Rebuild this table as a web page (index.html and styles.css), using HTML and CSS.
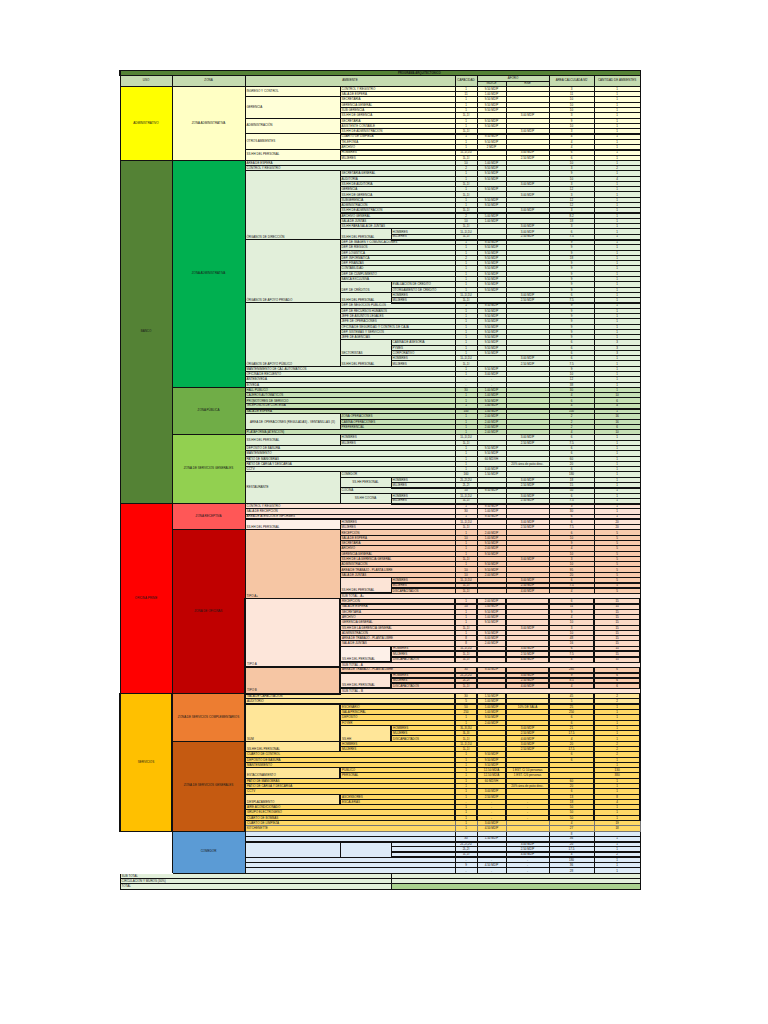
FILE: index.html
```html
<!DOCTYPE html>
<html lang="es">
<head>
<meta charset="utf-8">
<title>Programa Arquitectónico</title>
<link rel="stylesheet" href="styles.css">
</head>
<body>
<div class="page">
<table class="sheet">
<colgroup>
<col class="c-uso"><col class="c-zona"><col class="c-a1"><col class="c-a2"><col class="c-a3"><col class="c-cap"><col class="c-afo"><col class="c-rne"><col class="c-area"><col class="c-cant">
</colgroup>
<tbody class="s-head">
<tr class="title"><td colspan="10">PROGRAMA ARQUITECTONICO</td></tr>
<tr class="head"><td rowspan="2">USO</td><td rowspan="2">ZONA</td><td rowspan="2" colspan="3">AMBIENTE</td><td rowspan="2">CAPACIDAD</td><td colspan="2">AFORO</td><td rowspan="2">AREA CALCULADA M2</td><td rowspan="2">CANTIDAD DE AMBIENTES</td></tr>
<tr class="head"><td>INDICE</td><td>RNE</td></tr>
</tbody>
<tbody class="s-adm">
<tr><td rowspan="14" class="uso u-adm">ADMINISTRATIVO</td><td rowspan="14" class="zona z-adm">ZONA ADMINISTRATIVA</td><td rowspan="2" class="t m">INGRESO Y CONTROL</td><td colspan="2" class="t">CONTROL Y REGISTRO</td><td>1</td><td>9.50 M2/P</td><td></td><td>3</td><td>1</td></tr>
<tr><td colspan="2" class="t">SALA DE ESPERA</td><td>11</td><td>1.00 M2/P</td><td></td><td>11</td><td>1</td></tr>
<tr><td rowspan="4" class="t m">GERENCIA</td><td colspan="2" class="t">SECRETARIA</td><td>1</td><td>9.50 M2/P</td><td></td><td>10</td><td>1</td></tr>
<tr><td colspan="2" class="t">GERENCIA GENERAL</td><td>1</td><td>9.50 M2/P</td><td></td><td>10</td><td>1</td></tr>
<tr><td colspan="2" class="t">SUB GERENCIA</td><td>1</td><td>9.50 M2/P</td><td></td><td>10</td><td>1</td></tr>
<tr><td colspan="2" class="t">SS.HH DE GERENCIA</td><td>1L,1I</td><td></td><td>3.00 M2/P</td><td>3</td><td>1</td></tr>
<tr><td rowspan="3" class="t m">ADMINISTRACIÓN</td><td colspan="2" class="t">SECRETARIA</td><td>1</td><td>9.50 M2/P</td><td></td><td>9</td><td>1</td></tr>
<tr><td colspan="2" class="t">ASISTENTE CONTABLE</td><td>1</td><td>9.50 M2/P</td><td></td><td>10</td><td>1</td></tr>
<tr class="thick"><td colspan="2" class="t">SS.HH DE ADMINISTRACIÓN</td><td>1L,1I</td><td></td><td>3.00 M2/P</td><td>3</td><td>1</td></tr>
<tr><td rowspan="3" class="t m">OTROS AMBIENTES</td><td colspan="2" class="t">CUARTO DE LIMPIEZA</td><td>1</td><td>9.50 M2/P</td><td></td><td>4</td><td>1</td></tr>
<tr><td colspan="2" class="t">TELEFONÍA</td><td>1</td><td>9.50 M2/P</td><td></td><td>4</td><td>1</td></tr>
<tr class="thick"><td colspan="2" class="t">ARCHIVO</td><td>1</td><td>2 M2/P</td><td></td><td>4</td><td>1</td></tr>
<tr><td rowspan="2" class="t m">SS.HH DEL PERSONAL</td><td colspan="2" class="t">HOMBRES</td><td>1L,1I,1U</td><td></td><td>3.00 M2/P</td><td>6</td><td>1</td></tr>
<tr><td colspan="2" class="t">MUJERES</td><td>1L,1I</td><td></td><td>2.50 M2/P</td><td>6</td><td>1</td></tr>
</tbody>
<tbody class="s-banco">
<tr><td rowspan="65" class="uso u-banco">BANCO</td><td rowspan="43" class="zona z-badm">ZONA ADMINISTRATIVA</td><td colspan="3" class="t">ÁREA DE ESPERA</td><td>10</td><td>1.00 M2/P</td><td></td><td>10</td><td>1</td></tr>
<tr><td colspan="3" class="t">CONTROL Y REGISTRO</td><td>2</td><td>9.50 M2/P</td><td></td><td>3</td><td>2</td></tr>
<tr><td rowspan="13" class="t">ÓRGANOS DE DIRECCIÓN</td><td colspan="2" class="t">SECRETARIA GENERAL</td><td>1</td><td>9.50 M2/P</td><td></td><td>9</td><td>1</td></tr>
<tr><td colspan="2" class="t">AUDITORIA</td><td>1</td><td>9.50 M2/P</td><td></td><td>10</td><td>4</td></tr>
<tr><td colspan="2" class="t">SS.HH DE AUDITORIA</td><td>1L,1I</td><td></td><td>3.00 M2/P</td><td>3</td><td>1</td></tr>
<tr><td colspan="2" class="t">GERENCIA</td><td>1</td><td>9.50 M2/P</td><td></td><td>12</td><td>1</td></tr>
<tr><td colspan="2" class="t">SS.HH DE GERENCIA</td><td>1L,1I</td><td></td><td>3.00 M2/P</td><td>3</td><td>1</td></tr>
<tr><td colspan="2" class="t">SUBGERENCIA</td><td>1</td><td>9.50 M2/P</td><td></td><td>12</td><td>1</td></tr>
<tr><td colspan="2" class="t">ADMINISTRACIÓN</td><td>1</td><td>9.50 M2/P</td><td></td><td>12</td><td>1</td></tr>
<tr class="thick"><td colspan="2" class="t">SS.HH DE ADMINISTRACIÓN</td><td>1L,1I</td><td></td><td>3.00 M2/P</td><td>3</td><td>1</td></tr>
<tr><td colspan="2" class="t">ARCHIVO GENERAL</td><td>2</td><td>5.00 M2/P</td><td></td><td>8.2</td><td>1</td></tr>
<tr><td colspan="2" class="t">SALA DE JUNTAS</td><td>10</td><td>1.00 M2/P</td><td></td><td>18</td><td>1</td></tr>
<tr><td colspan="2" class="t">SS.HH PARA SALA DE JUNTAS</td><td>1L,1I</td><td></td><td>3.00 M2/P</td><td>3</td><td>1</td></tr>
<tr><td rowspan="2" class="t">SS.HH DEL PERSONAL</td><td class="t">HOMBRES</td><td>1L,1I,1U</td><td></td><td>3.00 M2/P</td><td>6</td><td>1</td></tr>
<tr class="thick"><td class="t">MUJERES</td><td>1L,1I</td><td></td><td>2.50 M2/P</td><td>7.5</td><td>1</td></tr>
<tr><td rowspan="12" class="t">ÓRGANOS DE APOYO PRIVADO</td><td colspan="2" class="t">DEP. DE IMAGEN Y COMUNICACIONES</td><td>1</td><td>9.50 M2/P</td><td></td><td>9</td><td>1</td></tr>
<tr><td colspan="2" class="t">DEP. DE RIESGOS</td><td>1</td><td>9.50 M2/P</td><td></td><td>9</td><td>1</td></tr>
<tr><td colspan="2" class="t">DEP. LOGÍSTICA</td><td>1</td><td>9.50 M2/P</td><td></td><td>9</td><td>1</td></tr>
<tr><td colspan="2" class="t">DEP. INFORMÁTICA</td><td>2</td><td>9.50 M2/P</td><td></td><td>18</td><td>1</td></tr>
<tr><td colspan="2" class="t">DEP. FINANZAS</td><td>1</td><td>9.50 M2/P</td><td></td><td>9</td><td>1</td></tr>
<tr><td colspan="2" class="t">CONTABILIDAD</td><td>1</td><td>9.50 M2/P</td><td></td><td>9</td><td>1</td></tr>
<tr><td colspan="2" class="t">DEP. DE CUMPLIMIENTO</td><td>1</td><td>9.50 M2/P</td><td></td><td>9</td><td>1</td></tr>
<tr><td colspan="2" class="t">BANCA EXCLUSIVA</td><td>1</td><td>9.50 M2/P</td><td></td><td>9</td><td>1</td></tr>
<tr><td rowspan="2" class="t">DEP. DE CRÉDITOS</td><td class="t">EVALUACIÓN DE CRÉDITO</td><td>1</td><td>9.50 M2/P</td><td></td><td>9</td><td>1</td></tr>
<tr><td class="t">OTORGAMIENTO DE CRÉDITO</td><td>1</td><td>9.50 M2/P</td><td></td><td>9</td><td>1</td></tr>
<tr><td rowspan="2" class="t">SS.HH DEL PERSONAL</td><td class="t">HOMBRES</td><td>1L,1I,1U</td><td></td><td>3.00 M2/P</td><td>6</td><td>1</td></tr>
<tr class="thick"><td class="t">MUJERES</td><td>1L,1I</td><td></td><td>2.50 M2/P</td><td>7.5</td><td>1</td></tr>
<tr><td rowspan="12" class="t">ÓRGANOS DE APOYO PÚBLICO</td><td colspan="2" class="t">DEP. DE NEGOCIOS PÚBLICOS</td><td>1</td><td>9.50 M2/P</td><td></td><td>9</td><td>1</td></tr>
<tr><td colspan="2" class="t">DEP. DE RECURSOS HUMANOS</td><td>1</td><td>9.50 M2/P</td><td></td><td>9</td><td>1</td></tr>
<tr><td colspan="2" class="t">JEFE DE ASUNTOS LEGALES</td><td>1</td><td>9.50 M2/P</td><td></td><td>9</td><td>1</td></tr>
<tr><td colspan="2" class="t">JEFE DE OPERACIONES</td><td>1</td><td>9.50 M2/P</td><td></td><td>9</td><td>1</td></tr>
<tr><td colspan="2" class="t">OFICINA DE SEGURIDAD Y CONTROL DE CAJA</td><td>1</td><td>9.50 M2/P</td><td></td><td>9</td><td>1</td></tr>
<tr><td colspan="2" class="t">DEP. SISTEMAS Y SERVICIOS</td><td>1</td><td>9.50 M2/P</td><td></td><td>9</td><td>1</td></tr>
<tr><td colspan="2" class="t">JEFE DE AGENCIAS</td><td>1</td><td>9.50 M2/P</td><td></td><td>9</td><td>1</td></tr>
<tr><td rowspan="3" class="t">SECTORISTAS</td><td class="t">CABINA DE ASESORÍA</td><td>1</td><td>9.50 M2/P</td><td></td><td>6</td><td>3</td></tr>
<tr><td class="t">PYMES</td><td>1</td><td>9.50 M2/P</td><td></td><td>6</td><td>3</td></tr>
<tr><td class="t">CORPORATIVO</td><td>1</td><td>9.50 M2/P</td><td></td><td>6</td><td>3</td></tr>
<tr><td rowspan="2" class="t">SS.HH DEL PERSONAL</td><td class="t">HOMBRES</td><td>1L,1I,1U</td><td></td><td>3.00 M2/P</td><td>6</td><td>1</td></tr>
<tr><td class="t">MUJERES</td><td>1L,1I</td><td></td><td>2.50 M2/P</td><td>7.5</td><td>1</td></tr>
<tr><td colspan="3" class="t">MANTENIMIENTO DE CAJ. AUTOMÁTICOS</td><td>1</td><td>9.50 M2/P</td><td></td><td>9</td><td>1</td></tr>
<tr><td colspan="3" class="t">OFICINA DE RECUENTO</td><td>1</td><td>3.00 M2/P</td><td></td><td>10</td><td>1</td></tr>
<tr><td colspan="3" class="t">ANTEBÓVEDA</td><td>-</td><td>-</td><td></td><td>12</td><td>1</td></tr>
<tr><td colspan="3" class="t">BÓVEDA</td><td>-</td><td>-</td><td></td><td>38</td><td>1</td></tr>
<tr class="r-pub"><td rowspan="9" class="zona z-pub">ZONA PÚBLICA</td><td colspan="3" class="t">HALL PÚBLICO</td><td>30</td><td>1.00 M2/P</td><td></td><td>30</td><td>1</td></tr>
<tr class="r-pub"><td colspan="3" class="t">CAJEROS AUTOMÁTICOS</td><td>1</td><td>1.00 M2/P</td><td></td><td>4</td><td>10</td></tr>
<tr class="r-pub"><td colspan="3" class="t">PROMOTORES DE SERVICIO</td><td>1</td><td>9.50 M2/P</td><td></td><td>6</td><td>6</td></tr>
<tr class="r-pub thick"><td colspan="3" class="t">TELÉFONOS DE CORTESÍA</td><td>1</td><td>1.00 M2/P</td><td></td><td>4</td><td>4</td></tr>
<tr class="r-pub"><td colspan="3" class="t">SALA DE ESPERA</td><td>100</td><td>1.00 M2/P</td><td></td><td>100</td><td>1</td></tr>
<tr class="r-pub"><td rowspan="3" class="wrap b-light">ÁREA DE OPERACIONES (REGULADAS) - VENTANILLAS (X)</td><td colspan="2" class="t">ZONA OPERACIONES</td><td>1</td><td>2.00 M2/P</td><td></td><td>2</td><td>16</td></tr>
<tr class="r-pub"><td colspan="2" class="t">CABINA OPERACIONES</td><td>1</td><td>2.00 M2/P</td><td></td><td>2</td><td>16</td></tr>
<tr class="r-pub"><td colspan="2" class="t">PREFERENCIAL</td><td>1</td><td>2.00 M2/P</td><td></td><td>2</td><td>6</td></tr>
<tr class="r-pub"><td colspan="3" class="t">PLATAFORMA (ATENCIÓN)</td><td>1</td><td>2.00 M2/P</td><td></td><td>4</td><td>10</td></tr>
<tr><td rowspan="13" class="zona z-bgen">ZONA DE SERVICIOS GENERALES</td><td rowspan="2" class="t m">SS.HH DEL PERSONAL</td><td colspan="2" class="t">HOMBRES</td><td>1L,1I,1U</td><td></td><td>3.00 M2/P</td><td>6</td><td>1</td></tr>
<tr><td colspan="2" class="t">MUJERES</td><td>1L,1I</td><td></td><td>2.50 M2/P</td><td>7.5</td><td>1</td></tr>
<tr><td colspan="3" class="t">DEPÓSITO DE BASURA</td><td>1</td><td>9.50 M2/P</td><td></td><td>6</td><td>1</td></tr>
<tr><td colspan="3" class="t">MANTENIMIENTO</td><td>1</td><td>9.50 M2/P</td><td></td><td>6</td><td>1</td></tr>
<tr><td colspan="3" class="t">PATIO DE MANIOBRAS</td><td>1</td><td>60 M2/VH</td><td></td><td>60</td><td>1</td></tr>
<tr><td colspan="3" class="t">PATIO DE CARGA Y DESCARGA</td><td>1</td><td></td><td>20% área de patio desc.</td><td>20</td><td>1</td></tr>
<tr><td colspan="3" class="t">CCTV</td><td>1</td><td>3.00 M2/P</td><td></td><td>6</td><td>1</td></tr>
<tr><td rowspan="6" class="t m">RESTAURANTE</td><td colspan="2" class="t">COMEDOR</td><td>160</td><td>1.50 M2/P</td><td></td><td>180</td><td>1</td></tr>
<tr><td rowspan="2" class="c m">SS.HH PERSONAL</td><td class="t">HOMBRES</td><td>2L,2I,2U</td><td></td><td>3.00 M2/P</td><td>18</td><td>1</td></tr>
<tr class="thick"><td class="t">MUJERES</td><td>2L,2I</td><td></td><td>2.50 M2/P</td><td>15</td><td>1</td></tr>
<tr><td colspan="2" class="t">COCINA</td><td>10</td><td>9.50 M2/P</td><td></td><td>50</td><td>1</td></tr>
<tr><td rowspan="2" class="c m">SS.HH COCINA</td><td class="t">HOMBRES</td><td>1L,1I,1U</td><td></td><td>3.00 M2/P</td><td>6</td><td>1</td></tr>
<tr class="thick"><td class="t">MUJERES</td><td>1L,1I</td><td></td><td>2.50 M2/P</td><td>7.5</td><td>1</td></tr>
</tbody>
<tbody class="s-ofi">
<tr class="r-rec"><td rowspan="36" class="uso u-ofi">OFICINA PRIME</td><td rowspan="5" class="zona z-rec">ZONA RECEPTIVA</td><td colspan="3" class="t">CONTROL Y REGISTRO</td><td>1</td><td>9.50 M2/P</td><td></td><td>3</td><td>1</td></tr>
<tr class="r-rec"><td colspan="3" class="t">SALA DE RECEPCIÓN</td><td>30</td><td>1.00 M2/P</td><td></td><td>30</td><td>1</td></tr>
<tr class="r-rec thick"><td colspan="3" class="t">ÁREA DE ATENCIÓN E INFORMES</td><td>1</td><td>9.50 M2/P</td><td></td><td>6</td><td>1</td></tr>
<tr class="r-rec"><td rowspan="2" class="t b-white">SS.HH DEL PERSONAL</td><td colspan="2" class="t">HOMBRES</td><td>1L,1I,1U</td><td></td><td>3.00 M2/P</td><td>6</td><td>20</td></tr>
<tr class="r-rec"><td colspan="2" class="t">MUJERES</td><td>1L,1I</td><td></td><td>2.50 M2/P</td><td>7.5</td><td>20</td></tr>
<tr><td rowspan="31" class="zona z-ofi">ZONA DE OFICINAS</td><td rowspan="13" class="t b-peach">TIPO A+</td><td colspan="2" class="t">RECEPCIÓN</td><td>1</td><td>2.00 M2/P</td><td></td><td>6</td><td>5</td></tr>
<tr><td colspan="2" class="t">SALA DE ESPERA</td><td>10</td><td>1.00 M2/P</td><td></td><td>10</td><td>5</td></tr>
<tr><td colspan="2" class="t">SECRETARIA</td><td>1</td><td>9.50 M2/P</td><td></td><td>9</td><td>5</td></tr>
<tr><td colspan="2" class="t">ARCHIVO</td><td>1</td><td>2.00 M2/P</td><td></td><td>4</td><td>5</td></tr>
<tr><td colspan="2" class="t">GERENCIA GENERAL</td><td>1</td><td>9.50 M2/P</td><td></td><td>10</td><td>5</td></tr>
<tr><td colspan="2" class="t">SS.HH DE LA GERENCIA GENERAL</td><td>1L,1I</td><td></td><td>3.00 M2/P</td><td>3</td><td>5</td></tr>
<tr><td colspan="2" class="t">ADMINISTRACIÓN</td><td>1</td><td>9.50 M2/P</td><td></td><td>10</td><td>5</td></tr>
<tr><td colspan="2" class="t">ÁREA DE TRABAJO - PLANTA LIBRE</td><td>10</td><td>9.50 M2/P</td><td></td><td>95</td><td>5</td></tr>
<tr><td colspan="2" class="t">SALA DE JUNTAS</td><td>10</td><td>2.00 M2/P</td><td></td><td>20</td><td>5</td></tr>
<tr class="thick"><td rowspan="3" class="t b-light2">SS.HH DEL PERSONAL</td><td class="t">HOMBRES</td><td>1L,1I,1U</td><td></td><td>3.00 M2/P</td><td>6</td><td>5</td></tr>
<tr class="thick"><td class="t">MUJERES</td><td>1L,1I</td><td></td><td>2.50 M2/P</td><td>7.5</td><td>5</td></tr>
<tr><td class="t">DISCAPACITADOS</td><td>1L,1I</td><td></td><td>4.00 M2/P</td><td>4</td><td>5</td></tr>
<tr class="sub"><td colspan="7" class="t">SUB TOTAL - A+</td></tr>
<tr class="r-ta tv thick"><td rowspan="13" class="t b-pale">TIPO A</td><td colspan="2" class="t">RECEPCIÓN</td><td>1</td><td>2.00 M2/P</td><td></td><td>6</td><td>15</td></tr>
<tr class="r-ta tv"><td colspan="2" class="t">SALA DE ESPERA</td><td>10</td><td>1.00 M2/P</td><td></td><td>11</td><td>15</td></tr>
<tr class="r-ta tv"><td colspan="2" class="t">SECRETARIA</td><td>1</td><td>9.50 M2/P</td><td></td><td>9</td><td>15</td></tr>
<tr class="r-ta tv"><td colspan="2" class="t">ARCHIVO</td><td>1</td><td>1.00 M2/P</td><td></td><td>4</td><td>15</td></tr>
<tr class="r-ta tv"><td colspan="2" class="t">GERENCIA GENERAL</td><td>1</td><td>9.50 M2/P</td><td></td><td>10</td><td>15</td></tr>
<tr class="r-ta tv"><td colspan="2" class="t">SS.HH DE LA GERENCIA GENERAL</td><td>1L,1I</td><td></td><td>3.00 M2/P</td><td>3</td><td>15</td></tr>
<tr class="r-ta tv"><td colspan="2" class="t">ADMINISTRACIÓN</td><td>1</td><td>9.50 M2/P</td><td></td><td>10</td><td>15</td></tr>
<tr class="r-ta tv"><td colspan="2" class="t">ÁREA DE TRABAJO - PLANTA LIBRE</td><td>8</td><td>6.00 M2/P</td><td></td><td>48</td><td>15</td></tr>
<tr class="r-ta tv"><td colspan="2" class="t">SALA DE JUNTAS</td><td>8</td><td>2.00 M2/P</td><td></td><td>16</td><td>15</td></tr>
<tr class="r-ta tv thick"><td rowspan="3" class="t b-white">SS.HH DEL PERSONAL</td><td class="t">HOMBRES</td><td>1L,1I,1U</td><td></td><td>3.00 M2/P</td><td>6</td><td>15</td></tr>
<tr class="r-ta tv thick"><td class="t">MUJERES</td><td>1L,1I</td><td></td><td>2.50 M2/P</td><td>7.5</td><td>15</td></tr>
<tr class="r-ta tv"><td class="t">DISCAPACITADOS</td><td>1L,1I</td><td></td><td>4.00 M2/P</td><td>4</td><td>15</td></tr>
<tr class="sub"><td colspan="7" class="t">SUB TOTAL - A</td></tr>
<tr class="tv thick"><td rowspan="5" class="t b-peach">TIPO B</td><td colspan="2" class="t">ÁREA DE TRABAJO - PLANTA LIBRE</td><td>30</td><td>9.50 M2/P</td><td></td><td>285</td><td>6</td></tr>
<tr class="tv thick"><td rowspan="3" class="t b-light2">SS.HH DEL PERSONAL</td><td class="t">HOMBRES</td><td>2L,2I,2U</td><td></td><td>3.00 M2/P</td><td>9</td><td>6</td></tr>
<tr class="tv thick"><td class="t">MUJERES</td><td>2L,2I</td><td></td><td>2.50 M2/P</td><td>8.5</td><td>6</td></tr>
<tr class="tv"><td class="t">DISCAPACITADOS</td><td>1L,1I</td><td></td><td>4.00 M2/P</td><td>4</td><td>6</td></tr>
<tr class="sub"><td colspan="7" class="t">SUB TOTAL - B</td></tr>
</tbody>
<tbody class="s-serv">
<tr class="r-sc tv"><td rowspan="26" class="uso u-serv">SERVICIOS</td><td rowspan="9" class="zona z-scomp">ZONA DE SERVICIOS COMPLEMENTARIOS</td><td colspan="3" class="t">SALA DE CAPACITACIÓN</td><td>30</td><td>1.50 M2/P</td><td></td><td>45</td><td>2</td></tr>
<tr class="r-sc tv thick"><td colspan="3" class="t">AUDITORIO</td><td>5</td><td>1.00 M2/P</td><td></td><td>5</td><td>2</td></tr>
<tr class="tv"><td rowspan="7" class="t b-sc">SUM</td><td colspan="2" class="t">ESCENARIO</td><td>50</td><td>1.00 M2/P</td><td>10% DE SALA</td><td>25</td><td>1</td></tr>
<tr class="tv"><td colspan="2" class="t">SALA PRINCIPAL</td><td>250</td><td>1.00 M2/P</td><td></td><td>250</td><td>1</td></tr>
<tr class="tv"><td colspan="2" class="t">DEPÓSITO</td><td>1</td><td>9.50 M2/P</td><td></td><td>6</td><td>1</td></tr>
<tr class="tv"><td colspan="2" class="t">FOYER</td><td>1</td><td>2.00 M2/P</td><td></td><td>6</td><td>1</td></tr>
<tr class="tv"><td rowspan="3" class="t b-sc">SS.HH</td><td class="t">HOMBRES</td><td>3L,3I,3U</td><td></td><td>3.00 M2/P</td><td>21</td><td>1</td></tr>
<tr class="tv"><td class="t">MUJERES</td><td>3L,3I</td><td></td><td>2.50 M2/P</td><td>17.5</td><td>1</td></tr>
<tr class="tv"><td class="t">DISCAPACITADOS</td><td>1L,1I</td><td></td><td>4.00 M2/P</td><td>4</td><td>1</td></tr>
<tr class="tv"><td rowspan="17" class="zona z-sgen">ZONA DE SERVICIOS GENERALES</td><td rowspan="2" class="t b-sc">SS.HH DEL PERSONAL</td><td colspan="2" class="t">HOMBRES</td><td>1L,1I,1U</td><td></td><td>3.00 M2/P</td><td>20</td><td>2</td></tr>
<tr class="tv"><td colspan="2" class="t">MUJERES</td><td>1L,1I</td><td></td><td>2.50 M2/P</td><td>17.5</td><td>2</td></tr>
<tr class="tv"><td colspan="3" class="t">CUARTO DE CONTROL</td><td>1</td><td>9.50 M2/P</td><td></td><td>6</td><td>2</td></tr>
<tr class="tv"><td colspan="3" class="t">DEPÓSITO DE BASURA</td><td>1</td><td>9.50 M2/P</td><td></td><td>6</td><td>1</td></tr>
<tr class="tv"><td colspan="3" class="t">MANTENIMIENTO</td><td>1</td><td>9.50 M2/P</td><td></td><td></td><td>1</td></tr>
<tr class="tv"><td rowspan="2" class="t b-sc">ESTACIONAMIENTO</td><td colspan="2" class="t">PÚBLICO</td><td>1</td><td>12.50 M2/A</td><td>1 EST. C/ 10 personas</td><td></td><td>130</td></tr>
<tr class="tv"><td colspan="2" class="t">PERSONAL</td><td>1</td><td>12.50 M2/A</td><td>1 EST. C/6 personas</td><td></td><td>380</td></tr>
<tr class="tv"><td colspan="3" class="t">PATIO DE MANIOBRAS</td><td>1</td><td>60 M2/VH</td><td></td><td>60</td><td>1</td></tr>
<tr class="tv"><td colspan="3" class="t">PATIO DE CARGA Y DESCARGA</td><td>1</td><td></td><td>20% área de patio desc.</td><td>20</td><td>1</td></tr>
<tr class="tv"><td colspan="3" class="t">CCTV</td><td>1</td><td>3.00 M2/P</td><td></td><td>6</td><td>1</td></tr>
<tr class="tv"><td rowspan="2" class="t b-sc">DESPLAZAMIENTO</td><td colspan="2" class="t">ASCENSORES</td><td>1</td><td>2.50 M2/P</td><td></td><td>13</td><td>8</td></tr>
<tr class="tv"><td colspan="2" class="t">ESCALERAS</td><td>-</td><td>-</td><td>-</td><td>18</td><td>4</td></tr>
<tr class="tv"><td colspan="3" class="t">AIRE ACONDICIONADO</td><td>1</td><td>-</td><td>-</td><td>50</td><td>1</td></tr>
<tr class="tv"><td colspan="3" class="t">GRUPO ELECTRÓGENO</td><td>1</td><td>-</td><td>-</td><td>50</td><td>1</td></tr>
<tr class="tv"><td colspan="3" class="t">CUARTO DE BOMBAS</td><td>1</td><td>-</td><td>-</td><td>50</td><td>1</td></tr>
<tr class="grey"><td colspan="3" class="t">CUARTO DE LIMPIEZA</td><td>1</td><td>3.00 M2/P</td><td></td><td>4</td><td>19</td></tr>
<tr class="grey"><td colspan="3" class="t">KITCHENETTE</td><td>1</td><td>4.50 M2/P</td><td></td><td>27</td><td>18</td></tr>
</tbody>
<tbody class="s-com">
<tr><td rowspan="8" class="blank"></td><td rowspan="8" class="zona z-com">COMEDOR</td><td colspan="3"></td><td></td><td></td><td></td><td>8</td><td></td></tr>
<tr class="thick"><td colspan="3"></td><td>30</td><td>1.50 M2/P</td><td></td><td>36</td><td>1</td></tr>
<tr><td rowspan="3"></td><td rowspan="3"></td><td></td><td>2L,2I,2U</td><td></td><td>3.00 M2/P</td><td>20</td><td>1</td></tr>
<tr class="thick"><td></td><td>2L,2I</td><td></td><td>2.50 M2/P</td><td>17.5</td><td>1</td></tr>
<tr class="thick"><td></td><td>1L,1I</td><td></td><td>4.00 M2/P</td><td>4</td><td>2</td></tr>
<tr><td colspan="3"></td><td>-</td><td>-</td><td>-</td><td>180</td><td>1</td></tr>
<tr><td colspan="3"></td><td>9</td><td>4.50 M2/P</td><td>-</td><td>36</td><td>1</td></tr>
<tr><td colspan="3"></td><td>-</td><td>-</td><td>-</td><td>28</td><td>1</td></tr>
</tbody>
<tbody class="s-tot">
<tr><td colspan="4" class="t">SUB TOTAL</td><td colspan="6"></td></tr>
<tr><td colspan="4" class="t">CIRCULACIÓN Y MUROS (30%)</td><td colspan="6"></td></tr>
<tr class="total"><td colspan="4" class="t">TOTAL</td><td colspan="6" class="tot-green"></td></tr>
</tbody>
</table>
</div>
</body>
</html>
```

FILE: styles.css
```css
body {
  margin: 0;
  background: #ffffff;
  font-family: "Liberation Sans", Arial, sans-serif;
}

.page {
  padding: 70px 0 0 119px;
}

.sheet {
  width: 520px;
  border-collapse: collapse;
  table-layout: fixed;
  font-size: 3px;
  line-height: 3.2px;
  color: #1a1a1a;
}

.sheet tr {
  height: 5.29px;
}

.sheet td {
  border: 1px solid #111;
  padding: 0;
  white-space: nowrap;
  overflow: visible;
  text-align: center;
  vertical-align: bottom;
}

.c-uso { width: 52px; }
.c-zona { width: 73px; }
.c-a1 { width: 95px; }
.c-a2 { width: 51px; }
.c-a3 { width: 64px; }
.c-cap { width: 22px; }
.c-afo { width: 29px; }
.c-rne { width: 43px; }
.c-area { width: 45px; }
.c-cant { width: 46px; }

.sheet .t { text-align: left; padding-left: 1px; }
.sheet .c { text-align: center; }
.sheet .m { vertical-align: middle; }

.sheet .wrap {
  white-space: normal;
  vertical-align: middle;
  line-height: 4.4px;
  padding: 0 3px;
}

.sheet .uso,
.sheet .zona {
  vertical-align: middle;
  text-align: center;
  white-space: normal;
  line-height: 3.6px;
}

.sheet .thick td { border-bottom-width: 2px; }
.sheet .tv td { border-left-width: 2px; border-right-width: 2px; }

/* header */
.title td {
  background: #548235;
  font-weight: bold;
  font-size: 2.8px;
  text-align: center;
  padding-left: 78px;
  vertical-align: middle;
  border-left: 2px solid #111;
}
.head td {
  background: #c5dbb0;
  vertical-align: middle;
}

/* administrativo */
.s-adm { background: #ffffd8; }
.sheet .u-adm { background: #ffff00; }
.sheet .z-adm { background: #ffffc4; }

/* banco */
.s-banco { background: #e2efda; }
.sheet .u-banco { background: #548235; }
.sheet .z-badm { background: #00b050; }
.sheet .z-pub { background: #70ad47; }
.sheet .z-bgen { background: #92d050; }
.r-pub { background: #c6e0b4; }
.sheet .b-light { background: #e2efda; }

/* oficina prime */
.s-ofi { background: #f8cbad; }
.sheet .u-ofi { background: #ff0000; }
.sheet .z-rec { background: #ff5757; }
.sheet .z-ofi { background: #c00000; }
.r-rec { background: #fce4d6; }
.r-ta { background: #fbdac6; }
.sub { background: #fce4d6; }
.sheet .b-white { background: #fdf0e8; }
.sheet .b-pale { background: #fde6da; }
.sheet .b-peach { background: #f6c6a4; }
.sheet .b-light2 { background: #fce4d6; }

/* servicios */
.s-serv { background: #ffd966; }
.sheet .u-serv { background: #ffc000; }
.sheet .z-scomp { background: #ed7d31; }
.sheet .z-sgen { background: #c55a11; }
.r-sc { background: #ffe699; }
.sheet .b-sc { background: #ffe699; }
.grey td { border-color: #777; }

/* comedor */
.s-com { background: #ddebf7; }
.sheet .blank {
  background: #ffffff;
  border-top-color: #ffffff;
  border-left-color: #ffffff;
  border-bottom-color: #ffffff;
}
.sheet .z-com { background: #5b9bd5; }

/* totales */
.s-tot { background: #e2efda; }
.sheet .tot-green { background: #a9d08e; }
.total td { border-bottom-width: 1px; }
```
